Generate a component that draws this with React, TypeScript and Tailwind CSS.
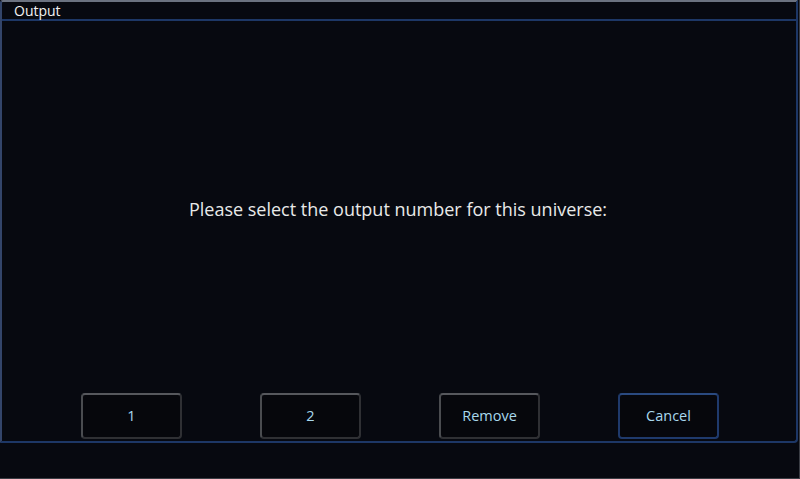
export default function App() {
  const buttons = [
    { label: '1', active: false },
    { label: '2', active: false },
    { label: 'Remove', active: false },
    { label: 'Cancel', active: true },
  ]

  return (
    <div
      className="w-[800px] h-[479px] bg-[#070910] flex flex-col border-r border-b border-[#3a3d44]"
      style={{ fontFamily: '"Open Sans", "Noto Sans", sans-serif' }}
    >
      {/* dialog */}
      <div className="w-[798px] h-[443px] flex flex-col border-2 border-[#1d3766] border-t-[#6b7280] border-l-[#33456a] rounded-br-[4px] rounded-tl-[3px]">
        <div className="h-[19px] flex items-center pl-[12px] border-b-2 border-[#1d3766]">
          <span className="text-[14px] leading-none text-[#f2f2f2]">Output</span>
        </div>

        <div className="flex-1 flex flex-col">
          <div className="h-[176px]" />
          <p className="text-center text-[18px] text-[#e9e9e9] leading-[24px] pr-[2px]">
            Please select the output number for this universe:
          </p>
          <div className="flex-1" />

          {/* buttons */}
          <div className="flex justify-center gap-[78px] pb-[2px] pl-[2px]">
            {buttons.map((b) => (
              <div
                key={b.label}
                className={`w-[101px] h-[46px] rounded-[4px] border-2 flex items-center justify-center bg-[#06070c] ${
                  b.active
                    ? 'border-[#1f3a6c] border-t-[#2a4a80]'
                    : 'border-[#2f3034] border-t-[#56585d] border-l-[#4a4c50]'
                }`}
              >
                <span className="text-[14.5px] text-[#a8d8ee]">{b.label}</span>
              </div>
            ))}
          </div>
        </div>
      </div>
    </div>
  )
}
